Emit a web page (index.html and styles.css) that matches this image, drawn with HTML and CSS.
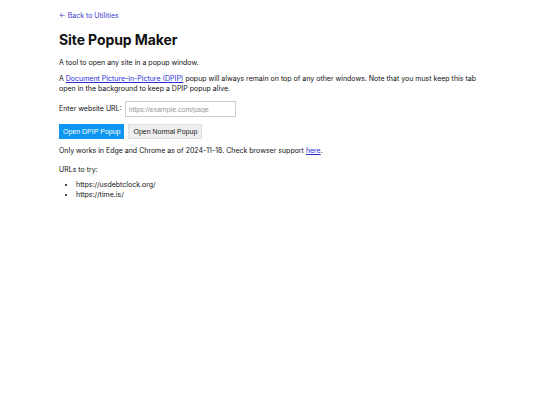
FILE: index.html
```html
<!DOCTYPE html>
<html>
<head>
<meta charset="utf-8">
<link rel="stylesheet" href="styles.css">
<title>Site Popup Maker</title>
</head>
<body>
<main class="page">
  <a class="back" href="#">← Back to Utilities</a>
  <h1 class="title">Site Popup Maker</h1>
  <p class="text">A tool to open any site in a popup window.</p>
  <p class="text">A <a class="link" href="#">Document Picture-in-Picture (DPIP)</a> popup will always remain on top of any other windows. Note that you must keep this tab open in the background to keep a DPIP popup alive.</p>
  <div class="row">
    <label class="label">Enter website URL:</label>
    <input class="input" type="text" placeholder="https://example.com/page">
  </div>
  <div class="buttons">
    <button class="btn btn-primary">Open DPIP Popup</button>
    <button class="btn btn-secondary">Open Normal Popup</button>
  </div>
  <p class="text note">Only works in Edge and Chrome as of 2024-11-18. Check browser support <a class="link" href="#">here</a>.</p>
  <p class="text list-head">URLs to try:</p>
  <ul class="list">
    <li>https://usdebtclock.org/</li>
    <li>https://time.is/</li>
  </ul>
</main>
</body>
</html>
```
FILE: styles.css
```css
html, body {
  margin: 0;
  padding: 0;
  background: #fff;
}
body {
  font-family: "Inter", "Liberation Sans", sans-serif;
  font-size: 7px;
  line-height: 10px;
  color: #111;
}
.page {
  width: 422px;
  padding: 11px 0 0 59px;
}
.back {
  display: block;
  color: #3b3bd0;
  text-decoration: none;
  font-size: 7px;
  line-height: 10px;
}
.title {
  font-size: 14px;
  line-height: 20px;
  font-weight: 700;
  letter-spacing: -0.1px;
  margin: 9px 0 8px;
  color: #111;
}
.text {
  margin: 0 0 6px;
}
.note {
  margin-bottom: 9px;
}
.list-head {
  margin-bottom: 5px;
}
.link {
  color: #2b2bd6;
  text-decoration: underline;
}
.row {
  display: flex;
  align-items: center;
  gap: 3px;
  margin: 7px 0 7px;
}
.input {
  width: 111px;
  height: 16px;
  box-sizing: border-box;
  border: 1px solid #ccc;
  padding: 0 3px;
  font-family: "Liberation Sans", sans-serif;
  font-size: 7px;
}
.input::placeholder {
  color: #999;
}
.buttons {
  display: flex;
  gap: 4px;
  margin-bottom: 7px;
}
.btn {
  height: 15px;
  padding: 0 4px;
  font-family: "Liberation Sans", sans-serif;
  font-size: 7px;
  border: none;
}
.btn-primary {
  background: #0c96f2;
  color: #fff;
}
.btn-secondary {
  background: #eee;
  color: #222;
  border: 1px solid #ddd;
}
.list {
  margin: 0;
  padding-left: 17px;
}
```
